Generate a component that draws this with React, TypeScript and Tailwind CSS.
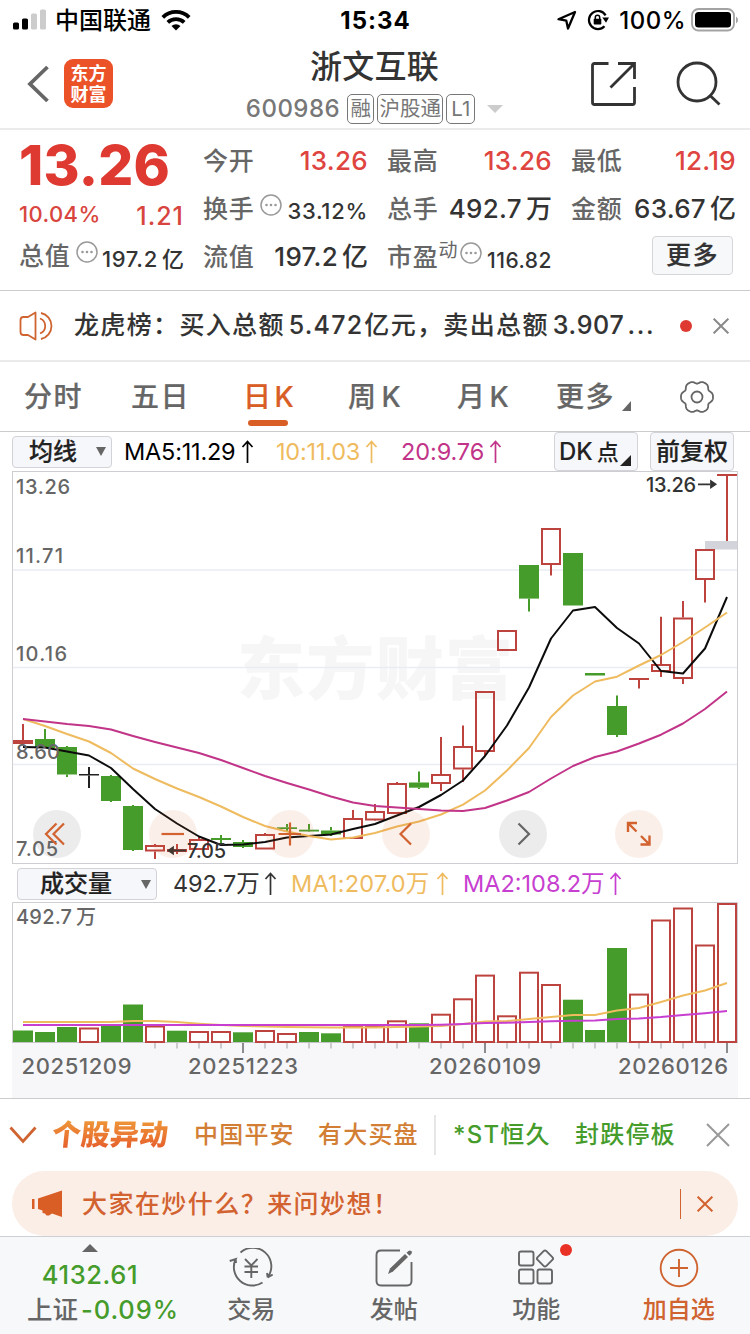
import type { ReactNode } from 'react';

type Tone = 'up' | 'down' | 'flat';

interface Candle {
  tone: Tone;
  top: number;
  bottom: number;
  high: number;
  low: number;
}

const UP = '#bd443e';
const DOWN = '#459c2b';
const STEP = 22;
const FIRST_X = 23;

const candle = (tone: Tone, top: number, bottom: number, high: number, low: number): Candle => ({
  tone,
  top,
  bottom,
  high,
  low,
});

const CANDLES: Candle[] = [
  candle('up', 740, 744, 724, 744),
  candle('down', 739, 748, 729, 748),
  candle('down', 747, 774.5, 746, 777),
  candle('flat', 774, 775.5, 767, 788),
  candle('down', 776, 801, 775, 802),
  candle('down', 806, 850, 805, 851),
  candle('up', 845, 851.5, 844, 859),
  candle('up', 849, 852, 844, 854),
  candle('up', 839, 850, 837, 850),
  candle('down', 838, 840, 835, 843),
  candle('down', 842, 847, 840, 848),
  candle('up', 834, 849.5, 833, 849),
  candle('down', 827.3, 829, 824, 831),
  candle('down', 829.7, 831.5, 824, 832),
  candle('down', 830.5, 834.5, 827, 836),
  candle('up', 818, 839, 810, 839),
  candle('up', 811, 820.5, 804, 821),
  candle('up', 783, 814, 782, 814),
  candle('down', 782.5, 787.7, 771.5, 789),
  candle('up', 774, 784, 737, 791),
  candle('up', 746, 769.5, 725.5, 782),
  candle('up', 691, 752, 691, 756),
  candle('up', 630, 651, 630, 651),
  candle('down', 565, 598.6, 565, 611.5),
  candle('up', 528, 565, 528, 575.5),
  candle('down', 553, 605.5, 553, 605.5),
  candle('down', 673, 675.5, 673, 675),
  candle('down', 706, 735, 695.5, 737),
  candle('up', 678, 680, 678, 688.5),
  candle('up', 664, 672, 616.7, 677),
  candle('up', 617.5, 679, 601, 684),
  candle('up', 549, 580, 549, 602.5),
  candle('up', 474, 476, 474, 541),
];

const MA5 = [
  747, 747.5, 751.5, 755.5, 768, 789, 809, 823.5, 836.5, 845, 844.5, 842, 837.5, 836, 834.5, 829, 824, 815.5, 807, 795,
  780.5, 756, 725.5, 687.5, 638.5, 610.5, 607, 628, 643.5, 671, 673.5, 648.5, 597,
];
const MA10 = [
  719, 726, 734, 741.5, 753, 768.5, 779, 788.5, 797, 806.5, 817, 826, 831.5, 836, 839.5, 837.5, 833, 826.5, 821.5, 814.5,
  804.7, 790.5, 770.5, 748, 717, 695.5, 681.5, 676.7, 665.5, 655, 642, 627.5, 612.5,
];
const MA20 = [
  719, 721.5, 724, 726, 729.5, 736, 742, 747.5, 753, 760, 768, 776, 783, 789.5, 796.5, 802.5, 806, 807.5, 809, 810.5, 811,
  808, 800.5, 792, 778.5, 766, 757, 751.5, 743.5, 734.7, 723.5, 709, 691.5,
];

const VOLUMES: [Tone, number][] = [
  ['down', 1030.5],
  ['down', 1032],
  ['down', 1027],
  ['up', 1027.5],
  ['down', 1025.5],
  ['down', 1004.5],
  ['up', 1025.5],
  ['down', 1030.7],
  ['up', 1031],
  ['up', 1031],
  ['down', 1032.3],
  ['up', 1030],
  ['up', 1033],
  ['down', 1032],
  ['down', 1033.3],
  ['up', 1025.5],
  ['up', 1026],
  ['up', 1020.3],
  ['down', 1023.3],
  ['up', 1013.7],
  ['up', 998.3],
  ['up', 974.6],
  ['up', 1015.3],
  ['up', 971.7],
  ['up', 984],
  ['down', 999.7],
  ['down', 1030],
  ['down', 948],
  ['up', 993.6],
  ['up', 919.5],
  ['up', 907.5],
  ['up', 944.5],
  ['up', 903],
];
const VOL_MA1 = [
  1022, 1022, 1022, 1022, 1022, 1021, 1021, 1022, 1023.7, 1025, 1026, 1026.5, 1027, 1027.2, 1027.5, 1027.5, 1027.5, 1027,
  1026.5, 1026, 1024, 1021.5, 1021, 1019, 1017, 1015, 1015, 1010.5, 1008, 1002, 995.5, 990.5, 983,
];
const VOL_MA2 = [
  1025, 1025, 1025, 1025, 1025, 1025, 1025, 1025, 1025, 1025, 1025, 1025, 1025, 1025, 1025, 1025, 1025, 1025, 1025, 1024.7,
  1024, 1023, 1022.7, 1022, 1021.3, 1020.7, 1020.5, 1019, 1018.5, 1017, 1015, 1013.2, 1011,
];

const x = (i: number) => FIRST_X + i * STEP;
const line = (ys: number[]) => ys.map((y, i) => `${x(i)},${y}`).join(' ');

function CandleMark({ c, i }: { c: Candle; i: number }) {
  const color = c.tone === 'up' ? UP : c.tone === 'down' ? DOWN : '#222';
  const hollow = c.tone === 'up' && c.bottom - c.top > 5;
  return (
    <g>
      {c.high < c.top && <line x1={x(i)} x2={x(i)} y1={c.high} y2={c.top} stroke={color} strokeWidth="2" />}
      {c.low > c.bottom && <line x1={x(i)} x2={x(i)} y1={c.bottom} y2={c.low} stroke={color} strokeWidth="2" />}
      {hollow ? (
        <rect x={x(i) - 9} y={c.top + 1} width="18" height={c.bottom - c.top - 2} fill="none" stroke={color} strokeWidth="2" />
      ) : (
        <rect x={x(i) - 10} y={c.top} width="20" height={c.bottom - c.top} fill={color} />
      )}
    </g>
  );
}

function PriceChart() {
  return (
    <svg viewBox="12 471 726 393" className="block h-[393px] w-[726px]">
      <text x="237" y="694" textLength="276" fontSize="68" fontWeight="900" fill="#f6f6f6">
        东方财富
      </text>
      {[570, 667.5, 764.5].map((y) => (
        <line key={y} x1="13" x2="737" y1={y} y2={y} stroke="#e9edf2" strokeWidth="1.5" />
      ))}
      <rect x="12.5" y="471.5" width="725" height="392" fill="none" stroke="#cdcdd2" />
      <rect x="705" y="541" width="32" height="8.5" fill="#d3d3db" />
      {CANDLES.map((c, i) => (
        <CandleMark key={i} c={c} i={i} />
      ))}
      <g fill="none" strokeWidth="2" strokeLinejoin="round">
        <polyline points={line(MA5)} stroke="#0c0c0c" />
        <polyline points={line(MA10)} stroke="#efbb5f" />
        <polyline points={line(MA20)} stroke="#c13488" />
      </g>
      <g fontSize="20" fontWeight="500" fill="#666">
        <text x="16" y="494" textLength="54">13.26</text>
        <text x="16" y="562.5" textLength="47">11.71</text>
        <text x="16" y="660.5" textLength="51">10.16</text>
        <text x="16" y="758.5" textLength="44">8.60</text>
        <text x="16" y="856" textLength="42">7.05</text>
      </g>
      <g fontSize="20" fontWeight="500" fill="#333">
        <text x="646" y="491.5" textLength="50">13.26</text>
        <text x="187" y="858" textLength="39">7.05</text>
      </g>
      <path d="M698 484.3h12M711 481.2l4.5 3.1-4.5 3.1z" fill="#333" stroke="#333" strokeWidth="1.8" />
      <path d="M186 850.5h-12M173 847.4l-4.5 3.1 4.5 3.1z" fill="#333" stroke="#333" strokeWidth="1.8" />
    </svg>
  );
}

function VolumeChart() {
  return (
    <svg viewBox="12 902 726 196" className="block h-[196px] w-[726px]">
      <rect x="12" y="1042" width="726" height="56" fill="#f7f7fa" />
      <path d="M12.5 1042V902.5H737.5V1042" fill="none" stroke="#cdcdd2" />
      <path d="M12 1042.5H738" stroke="#c4c4c8" />
      <g fontSize="20" fontWeight="500" fill="#666">
        <text x="16" y="923.5" textLength="56">492.7</text>
        <text x="76" y="923.5">万</text>
      </g>
      {VOLUMES.map(([tone, top], i) =>
        tone === 'up' ? (
          <rect key={i} x={x(i) - 9} y={top + 1} width="18" height={1041 - top} fill="#fff" stroke={UP} strokeWidth="2" />
        ) : (
          <rect key={i} x={x(i) - 10} y={top} width="20" height={1042 - top} fill={DOWN} />
        ),
      )}
      <g fill="none" strokeWidth="2">
        <polyline points={line(VOL_MA1)} stroke="#efbb5f" />
        <polyline points={line(VOL_MA2)} stroke="#c73fd0" />
      </g>
      {VOLUMES.map((_, i) => {
        if (i < 6) return null;
        const major = i === 10 || i === 21 || i === 32;
        return (
          <line
            key={i}
            x1={x(i)}
            x2={x(i)}
            y1="1043"
            y2={major ? 1053 : 1048.5}
            stroke={major ? '#8c8c8c' : '#cbcbce'}
            strokeWidth="2"
          />
        );
      })}
      <g fontSize="22" fontWeight="500" fill="#666">
        <text x="21.5" y="1074" textLength="110">20251209</text>
        <text x="188" y="1074" textLength="110">20251223</text>
        <text x="429" y="1074" textLength="112">20260109</text>
        <text x="618" y="1074" textLength="110">20260126</text>
      </g>
    </svg>
  );
}

function ChartButton({ gray = false, children }: { gray?: boolean; children: ReactNode }) {
  return (
    <button className={`size-12 shrink-0 rounded-full ${gray ? 'bg-[#646464]/12' : 'bg-[#d95e26]/10'}`}>
      <svg viewBox="0 0 48 48" className="size-12" fill="none" stroke="currentColor" strokeWidth="2.2">
        {children}
      </svg>
    </button>
  );
}

function ChartControls() {
  return (
    <div className="absolute bottom-[6px] left-[21px] flex gap-[68.4px] text-[#d2622f]">
      <ChartButton gray>
        <path d="M23.5 13.5 13 24l10.5 10.5M31 13.5 20.5 24 31 34.5" />
      </ChartButton>
      <ChartButton>
        <path d="M12.5 24H35" />
      </ChartButton>
      <ChartButton>
        <path d="M12.5 24H35M24 12.5V35.5" />
      </ChartButton>
      <ChartButton>
        <path d="M29 13.5 18.5 24 29 34.5" />
      </ChartButton>
      <ChartButton gray>
        <path d="M19.5 13.5 30 24 19.5 34.5" stroke="#666" />
      </ChartButton>
      <ChartButton>
        <path d="M13 22V13H22M13 13 21.5 21.5M34.5 25.5V34.5H25.5M34.5 34.5 26 26" strokeWidth="2.4" />
      </ChartButton>
    </div>
  );
}

function Cross({ className, width = 2 }: { className: string; width?: number }) {
  return (
    <svg viewBox="0 0 24 24" className={className} fill="none" stroke="currentColor" strokeWidth={width}>
      <path d="M1 1 23 23M23 1 1 23" />
    </svg>
  );
}

function UpArrow() {
  return (
    <svg viewBox="0 0 13 24" className="h-6 w-[13px] shrink-0" fill="none" stroke="currentColor" strokeWidth="1.7">
      <path d="M6.5 23V2M1.5 7 6.5 1.5 11.5 7" />
    </svg>
  );
}

function MoreDots({ className = '' }: { className?: string }) {
  return (
    <svg viewBox="0 0 22 22" className={`size-[22px] shrink-0 text-[#999] ${className}`}>
      <circle cx="11" cy="11" r="10" fill="none" stroke="currentColor" strokeWidth="1.5" />
      <circle cx="6.5" cy="11" r="1.3" fill="currentColor" />
      <circle cx="11" cy="11" r="1.3" fill="currentColor" />
      <circle cx="15.5" cy="11" r="1.3" fill="currentColor" />
    </svg>
  );
}

function StatusBar() {
  return (
    <div className="grid h-10 grid-cols-[1fr_auto_1fr] items-center pr-[12px] pl-[13px] text-black">
      <div className="flex items-center">
        <svg viewBox="0 0 33 22" className="h-[22px] w-[33px]">
          <rect y="13.5" width="6" height="7" rx="1.5" />
          <rect x="9" y="9.5" width="6" height="11" rx="1.5" />
          <rect x="18" y="4.5" width="6" height="16" rx="1.5" fill="#ccc" />
          <rect x="27" y="0.5" width="6" height="20" rx="1.5" fill="#ccc" />
        </svg>
        <span className="mt-[2px] ml-[9px] text-2xl leading-none font-medium">中国联通</span>
        <svg viewBox="0 0 30 22" className="ml-[10px] h-[22px] w-[30px]" fill="none" stroke="#000" strokeWidth="3.8">
          <path d="M1.8 8.3a19 19 0 0 1 26.4 0" />
          <path d="M6.8 13.4a12 12 0 0 1 16.4 0" />
          <path d="M15 21.5 10.5 17a6.5 6.5 0 0 1 9 0z" fill="#000" stroke="none" />
        </svg>
      </div>
      <span className="mt-px text-2xl font-bold tracking-[1px]">15:34</span>
      <div className="flex items-center justify-end">
        <svg viewBox="0 0 20 20" className="size-5" fill="none" stroke="#000" strokeWidth="2.3" strokeLinejoin="round">
          <path d="M18 2 1.5 9.2l7.8 1.5L11 18.5z" />
        </svg>
        <svg viewBox="0 0 22 22" className="ml-[10px] size-[22px]" fill="none" stroke="#000" strokeWidth="2.2">
          <path d="M18.6 6.3A9 9 0 1 0 17.5 17.2" />
          <path d="M15.3 8.6h6.7l-3 5.2z" fill="#000" stroke="none" />
          <rect x="6.7" y="9.8" width="7.6" height="5.7" rx="0.8" fill="#000" stroke="none" />
          <path d="M8.3 10V8.5a2.2 2.2 0 0 1 4.4 0V10" strokeWidth="1.5" />
        </svg>
        <span className="mt-[2px] ml-[10px] text-2xl font-medium tracking-[0.5px]">100%</span>
        <svg viewBox="0 0 47 24" className="ml-[5px] h-6 w-[47px]">
          <rect x="1" y="1" width="42" height="21.5" rx="6.5" fill="none" stroke="#a3a3a3" strokeWidth="1.8" />
          <rect x="4" y="4" width="36" height="15.5" rx="3.5" />
          <path d="M45 8.5v7q2-1.2 2-3.5t-2-3.5z" fill="#a3a3a3" />
        </svg>
      </div>
    </div>
  );
}

function Badge({ className, children }: { className: string; children: ReactNode }) {
  return (
    <span className={`flex h-[30px] items-center justify-center rounded-[5px] border border-[#777] text-[20.5px] leading-none ${className}`}>
      {children}
    </span>
  );
}

function Header() {
  return (
    <header className="flex h-[90px] items-start justify-between border-b-2 border-[#ebebeb] pr-[28px] pl-[27px]">
      <div className="flex w-[204px] items-center gap-[15px] pt-[19px]">
        <svg viewBox="0 0 22 38" className="h-[38px] w-[22px]" fill="none" stroke="#666" strokeWidth="3.8">
          <path d="M20.5 2 3 19l17.5 17" />
        </svg>
        <div className="flex size-[49px] flex-col items-center justify-center rounded-[9px] bg-[#ec5228] text-[18px] leading-[21px] font-bold text-white">
          <span>东方</span>
          <span>财富</span>
        </div>
      </div>
      <div className="flex flex-col items-center">
        <h1 className="mt-[10px] text-[32px] leading-[34px] font-medium tracking-[0.3px] text-[#333]">浙文互联</h1>
        <div className="mt-[10px] flex items-center text-[#777]">
          <span className="text-2xl leading-none font-medium tracking-[0.5px]">600986</span>
          <Badge className="ml-[7px] w-[27px]">融</Badge>
          <Badge className="ml-[3px] w-[66px]">沪股通</Badge>
          <Badge className="ml-[3px] w-[29px]">L1</Badge>
          <svg viewBox="0 0 16 8" className="ml-[12px] h-2 w-4" fill="#ccc">
            <path d="M0 0h16L8 8z" />
          </svg>
        </div>
      </div>
      <div className="flex w-[204px] items-center justify-end gap-[38px] pt-[20px]">
        <svg viewBox="0 0 48 48" className="size-12" fill="none" stroke="#333" strokeWidth="2.8">
          <path d="M20.5 3.5H6.5Q4.5 3.5 4.5 5.5V42.5Q4.5 44.5 6.5 44.5H44.5Q46.5 44.5 46.5 42.5V27" />
          <path d="M30 3.5H46.5V19M46.5 3.5 22.5 27.5" />
        </svg>
        <svg viewBox="0 0 48 48" className="size-12" fill="none" stroke="#333" strokeWidth="2.8">
          <circle cx="23" cy="22" r="19" />
          <path d="M35.5 35 45.5 44.5" />
        </svg>
      </div>
    </header>
  );
}

function Stat({
  label,
  size = 'text-[26px] tracking-[0.3px]',
  className = '',
  unit,
  children,
}: {
  label: ReactNode;
  size?: string;
  className?: string;
  unit?: string;
  children: ReactNode;
}) {
  return (
    <div className="flex h-12 items-center justify-between whitespace-nowrap">
      <span className="flex items-center text-[25px] leading-none font-medium tracking-[0.8px] text-[#666]">{label}</span>
      <span className={`flex items-center leading-none font-medium ${size} ${className}`}>
        {children}
        {unit && <span className="ml-[4px] tracking-normal">{unit}</span>}
      </span>
    </div>
  );
}

function Quote() {
  return (
    <section className="grid h-[161px] grid-cols-[165px_165px_165px_165px] gap-x-[19px] border-b border-[#ccc] pl-[19px] text-[#333]">
      <div>
        <div className="h-[66px] pt-[7px] text-[55px] leading-[56px] font-extrabold tracking-[0.2px] text-[#df3a31]">13.26</div>
        <div className="flex h-9 items-center justify-between leading-none font-medium text-[#d8453e]">
          <span className="text-[22px] tracking-[0.4px]">10.04%</span>
          <span className="mt-[4px] text-[25px] tracking-[1px]">1.21</span>
        </div>
        <Stat
          label={
            <>
              总值
              <MoreDots className="mb-[8px] ml-[5px]" />
            </>
          }
          size="text-[22px] tracking-[0.7px]"
          className="pt-[6px]"
          unit="亿"
        >
          197.2
        </Stat>
      </div>
      <div className="pt-[7px]">
        <Stat label="今开" className="text-[#df4540]">
          13.26
        </Stat>
        <Stat
          label={
            <>
              换手
              <MoreDots className="mb-[9px] ml-[5px]" />
            </>
          }
          size="text-[22px] tracking-[0.7px]"
          className="pt-[3px]"
        >
          33.12%
        </Stat>
        <Stat label="流值" unit="亿">
          197.2
        </Stat>
      </div>
      <div className="pt-[7px]">
        <Stat label="最高" className="text-[#df4540]">
          13.26
        </Stat>
        <Stat label="总手" unit="万">
          492.7
        </Stat>
        <Stat
          label={
            <>
              市盈
              <span className="mb-[14px] text-[19px] font-normal tracking-normal">动</span>
              <MoreDots className="mb-[9px] ml-[2px]" />
            </>
          }
          size="text-[21px] tracking-[0.5px]"
          className="pt-[7px]"
        >
          116.82
        </Stat>
      </div>
      <div className="pt-[7px]">
        <Stat label="最低" className="text-[#df4540]">
          12.19
        </Stat>
        <Stat label="金额" unit="亿">
          63.67
        </Stat>
        <div className="flex h-12 items-center justify-end pr-[3px] pb-[4px]">
          <button className="h-[39px] w-[81px] rounded-[4px] border border-[#d6d6da] bg-[#f7f8fa] text-[25px] leading-none font-medium tracking-[1.5px] [-webkit-text-stroke:0.2px]">
            更多
          </button>
        </div>
      </div>
    </section>
  );
}

function Notice() {
  return (
    <div className="flex h-[71px] items-center border-b-2 border-[#eaeaea] pr-[21px] pl-[19px]">
      <svg viewBox="0 0 36 30" className="h-[30px] w-9" fill="none" stroke="#cf6431" strokeWidth="1.8">
        <path d="M16.5 1.5V28.5L9 24H4.5Q1.5 24 1.5 21V9Q1.5 6 4.5 6H9z" strokeLinejoin="round" />
        <path d="M21 7.5a8 8 0 0 1 0 15M22 2a13.3 13.3 0 0 1 0 26" />
      </svg>
      <p className="ml-[19px] text-[25px] leading-none font-medium tracking-[1.35px] whitespace-nowrap text-[#333] [-webkit-text-stroke:0.1px]">
        龙虎榜：买入总额
        <span className="mr-px ml-[4px] tracking-[1.2px]">5.472</span>亿元，卖出总额
        <span className="ml-[4px] tracking-[0.7px]">3.907</span>
        <span className="ml-[3px] tracking-[1.7px]">...</span>
      </p>
      <span className="ml-auto size-3 rounded-full bg-[#df3a31]" />
      <Cross className="ml-[21px] size-4 text-[#8a8a8a]" width={3} />
    </div>
  );
}

// six wide teeth with narrow notches between them
function gearPath() {
  const points: string[] = [];
  for (let d = 0; d < 360; d += 3) {
    const t = (d * Math.PI) / 180;
    const r = 16 - 2.6 * ((1 - Math.cos(6 * t)) / 2) ** 2;
    points.push(`${(17 + r * Math.cos(t)).toFixed(2)} ${(17 + r * Math.sin(t)).toFixed(2)}`);
  }
  return `M${points.join('L')}Z`;
}

function Tabs() {
  return (
    <nav className="flex h-[70px] items-center border-b border-[#ccc] pl-[24px] text-[28px] leading-none font-medium tracking-[1.5px] text-[#666] [-webkit-text-stroke:0.2px]">
      <span className="w-[107px]">分时</span>
      <span className="w-[112px]">五日</span>
      <span className="relative w-[105px] text-[#d95e26]">
        日<span className="ml-[2px]">K</span>
        <span className="absolute top-[37px] left-[5px] h-[6px] w-10 rounded-full bg-[#d95e26]" />
      </span>
      <span className="w-[109px]">
        周<span className="ml-[4px]">K</span>
      </span>
      <span className="w-[99px]">
        月<span className="ml-[3px]">K</span>
      </span>
      <span className="flex items-end">
        更多
        <svg viewBox="0 0 9 10" className="ml-[7px] h-[10px] w-[9px]" fill="#666">
          <path d="M9 0V10H0z" />
        </svg>
      </span>
      <svg viewBox="0 0 34 34" className="mr-[36px] ml-auto size-[34px]" fill="none" stroke="#666" strokeWidth="1.8">
        <path d={gearPath()} strokeLinejoin="round" />
        <circle cx="17" cy="17" r="5.5" />
      </svg>
    </nav>
  );
}

function Dropdown({ className, children }: { className: string; children: ReactNode }) {
  return (
    <button className={`flex h-8 shrink-0 items-center justify-between rounded-[4px] border border-[#d2d2d8] bg-[#f6f7fa] text-2xl leading-none font-medium text-[#222] [-webkit-text-stroke:0.2px] ${className}`}>
      {children}
      <svg viewBox="0 0 10 9" className="h-[9px] w-[10px]" fill="#666">
        <path d="M0 0h10L5 9z" />
      </svg>
    </button>
  );
}

function MaBar() {
  return (
    <div className="flex h-[39px] items-center pl-[12px] text-[23.5px] leading-none whitespace-nowrap">
      <Dropdown className="w-[100px] pr-[5px] pl-[16px]">均线</Dropdown>
      <div className="ml-[12px] flex w-[152px] items-center text-black">
        <span className="w-[117px] tracking-[-0.2px]">MA5:11.29</span>
        <UpArrow />
      </div>
      <div className="flex w-[125px] items-center text-[#efbb5f]">
        <span className="w-[89px] tracking-[-0.2px]">10:11.03</span>
        <UpArrow />
      </div>
      <div className="flex items-center text-[#c13488]">
        <span className="w-[88px] tracking-[-0.1px]">20:9.76</span>
        <UpArrow />
      </div>
      <button className="ml-auto flex h-[39px] w-[84px] items-center rounded-[4px] border border-[#d2d2d8] bg-[#f6f7fa] pl-[4px] text-2xl leading-none font-medium text-[#222]">
        DK<span className="ml-[4px] text-[22px]">点</span>
        <svg viewBox="0 0 11 11" className="mt-[18px] ml-[1px] h-[11px] w-[11px] shrink-0" fill="#222">
          <path d="M11 0V11H0z" />
        </svg>
      </button>
      <button className="mr-[16px] ml-[12px] h-[39px] w-[84px] rounded-[4px] border border-[#d2d2d8] bg-[#f6f7fa] text-2xl leading-none font-medium text-[#222] [-webkit-text-stroke:0.2px]">
        前复权
      </button>
    </div>
  );
}

function VolumeBar() {
  return (
    <div className="flex h-[38px] items-center pt-[2px] pl-[17px] text-[23.5px] leading-none whitespace-nowrap">
      <Dropdown className="w-[140px] pr-[5px] pl-[22px]">成交量</Dropdown>
      <div className="ml-[16px] flex w-[118px] items-center text-[#333]">
        <span className="w-[91px] tracking-[-0.1px]">492.7万</span>
        <UpArrow />
      </div>
      <div className="flex w-[172px] items-center text-[#efbb5f]">
        <span className="w-[145px] tracking-[0.2px]">MA1:207.0万</span>
        <UpArrow />
      </div>
      <div className="flex items-center text-[#c73fd0]">
        <span className="w-[146px]">MA2:108.2万</span>
        <UpArrow />
      </div>
    </div>
  );
}

function Ticker() {
  return (
    <div className="flex h-[73px] items-center border-t border-[#ccc] pl-[9px] text-2xl leading-none font-medium tracking-[1.2px] whitespace-nowrap">
      <svg viewBox="0 0 28 18" className="h-[18px] w-7" fill="none" stroke="#cf6431" strokeWidth="2.8">
        <path d="M1.5 1.5 14 15.5 26.5 1.5" />
      </svg>
      <span className="ml-[15px] w-[120px] -skew-x-6 bg-gradient-to-b from-[#ee9a3a] to-[#e4562a] bg-clip-text text-[29px] leading-[34px] font-black tracking-[0px] text-transparent">
        个股异动
      </span>
      <span className="ml-[22px] w-[124px] text-[#d27e34]">中国平安</span>
      <span className="w-[116px] text-[#d27e34]">有大买盘</span>
      <span className="h-10 w-[2px] bg-[#e6e6e6]" />
      <span className="ml-[17px] w-[122px] text-[#459c2b]">*ST恒久</span>
      <span className="text-[#459c2b]">封跌停板</span>
      <Cross className="mr-[20px] ml-auto size-6 text-[#999]" />
    </div>
  );
}

function AskBanner() {
  return (
    <div className="mx-[12px] flex h-[65px] items-center rounded-[33px] bg-[#fbeee7] pr-[25px] pl-[20px] text-[#d2622f]">
      <svg viewBox="0 0 30 28" className="h-7 w-[30px]" fill="#d95e26">
        <path d="M0 9h2.5v10H0zM6 8.5 30 0.5V27L20 23.5 17 25.5H14.5L13 23.5 10.5 23V20.5L6 19z" />
      </svg>
      <span className="ml-[20px] pt-[2px] text-[25px] leading-none font-medium tracking-[1.45px]">大家在炒什么？来问妙想！</span>
      <span className="ml-auto h-[30px] w-px bg-[#d2622f]" />
      <Cross className="ml-[16px] size-4 text-[#d2622f]" width={3} />
    </div>
  );
}

function NavItem({ label, className = '', children }: { label: string; className?: string; children: ReactNode }) {
  return (
    <div className={`flex flex-1 flex-col items-center pt-[11px] ${className}`}>
      <svg viewBox="0 0 44 40" className="h-10 w-11" fill="none" stroke="currentColor" strokeWidth="1.9">
        {children}
      </svg>
      <span className="mt-[10px] text-2xl leading-[24px] font-medium">{label}</span>
    </div>
  );
}

function BottomNav() {
  return (
    <nav className="flex h-[98px] border-t border-[#ccd0d4] bg-[#f7f8fa] text-[#666]">
      <div className="flex w-[180px] flex-col items-center">
        <svg viewBox="0 0 16 8" className="mt-[7px] h-2 w-4" fill="#666">
          <path d="M8 0 16 8H0z" />
        </svg>
        <span className="mt-[11px] text-[25.5px] leading-[24px] font-medium tracking-[0.6px] text-[#459c2b]">4132.61</span>
        <span className="mt-[10px] ml-[27px] flex self-start text-[25.5px] leading-[26px] font-medium whitespace-nowrap">
          <span>上证</span>
          <span className="ml-[3px] tracking-[0.9px] text-[#459c2b]">-0.09%</span>
        </span>
      </div>
      <NavItem label="交易">
        <path d="M11.5 4.5A18.5 18.5 0 0 1 38.7 29.3L43.7 26.7M38.7 29.3 38 25" />
        <path d="M33.5 34.5A18.5 18.5 0 0 1 6.7 11L0.7 13M6.7 11 7 15" />
        <path d="M16 11 22.3 17.5 28.5 11M22.3 17.5V30M15.5 18.5H29M15.5 24H29" />
      </NavItem>
      <NavItem label="发帖">
        <path d="M28 2.5H9Q4.5 2.5 4.5 7V33Q4.5 37.5 9 37.5H35Q39.5 37.5 39.5 33V14" />
        <path d="M16 26 18 20.5 33 6 36 9 21 23.5z" fill="currentColor" stroke="none" />
        <path d="M34.5 4.8 36.5 3Q38 2 39.3 3.3T39.3 6L37.5 7.8z" fill="currentColor" stroke="none" />
      </NavItem>
      <div className="relative flex flex-1">
        <NavItem label="功能">
          <rect x="5" y="3.5" width="14.5" height="14" rx="2" />
          <rect x="5" y="21.5" width="14.5" height="14" rx="2" />
          <rect x="23.5" y="21.5" width="14.5" height="14" rx="2" />
          <rect x="24.8" y="4.3" width="12.4" height="12.4" rx="2" transform="rotate(45 31 10.5)" />
        </NavItem>
        <span className="absolute top-[7px] left-[95px] size-3 rounded-full bg-[#e93225]" />
      </div>
      <NavItem label="加自选" className="text-[#cf6431]">
        <circle cx="22" cy="20" r="18.3" />
        <path d="M13 20H31M22 11V29" />
      </NavItem>
    </nav>
  );
}

export default function App() {
  return (
    <main className="h-[1334px] w-[750px] overflow-hidden bg-white font-['Inter','Noto_Sans_CJK_SC',sans-serif]">
      <StatusBar />
      <Header />
      <Quote />
      <Notice />
      <Tabs />
      <MaBar />
      <div className="relative mx-[12px]">
        <PriceChart />
        <ChartControls />
      </div>
      <VolumeBar />
      <div className="mx-[12px]">
        <VolumeChart />
      </div>
      <Ticker />
      <AskBanner />
      <BottomNav />
    </main>
  );
}
